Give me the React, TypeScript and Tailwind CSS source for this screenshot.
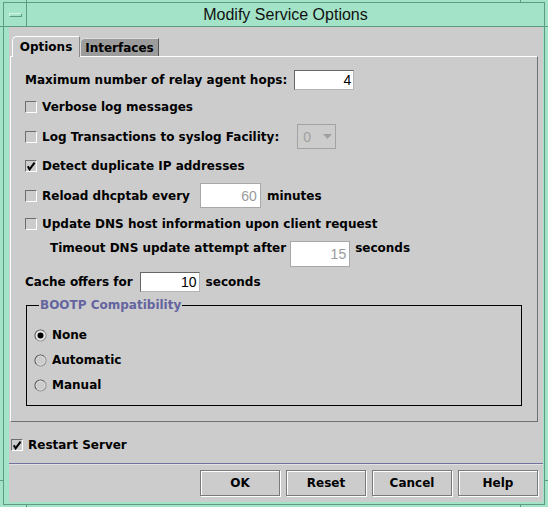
import React from 'react';

function CheckBox({ checked }: { checked?: boolean }) {
  return (
    <span className="flex h-[12px] w-[12px] shrink-0 items-center justify-center border border-t-[#6e6e6e] border-l-[#6e6e6e] border-r-white border-b-white">
      {checked && (
        <svg width="10" height="10" viewBox="0 0 10 10">
          <path d="M1.8 5.2 L3.6 8.4 L8.6 1.6" fill="none" stroke="#000" strokeWidth="2" />
        </svg>
      )}
    </span>
  );
}

function Radio({ selected }: { selected?: boolean }) {
  return (
    <svg width="13" height="13" viewBox="0 0 13 13" className="shrink-0">
      <circle cx="6.5" cy="6.5" r="5.5" fill={selected ? '#e6e6e6' : '#cccccc'} />
      <path d="M2.61 10.39 A5.5 5.5 0 0 1 10.39 2.61" fill="none" stroke="#4a4a4a" strokeWidth="1.1" />
      <path d="M10.39 2.61 A5.5 5.5 0 0 1 2.61 10.39" fill="none" stroke="#8c8c8c" strokeWidth="1.1" />
      <circle cx="6.5" cy="6.5" r="4.6" fill="none" stroke="#ececec" strokeWidth="0.6" />
      {selected && <circle cx="6.5" cy="6.5" r="3" fill="#000" />}
    </svg>
  );
}

function CheckRow({ label, checked, className }: { label: string; checked?: boolean; className: string }) {
  return (
    <div className={`flex items-center gap-[5px] ${className}`}>
      <CheckBox checked={checked} />
      <span>{label}</span>
    </div>
  );
}

function Button({ label }: { label: string }) {
  return (
    <button className="flex h-[26px] w-[80px] items-center justify-center border border-[#7a7a7a] bg-[#cccccc] shadow-[inset_1px_1px_0_#ffffff,1px_1px_0_#ffffff]">
      {label}
    </button>
  );
}

export default function App() {
  return (
    <div className="relative h-[507px] w-[548px] overflow-hidden bg-[#a3e3c8] pt-[2px] pr-[3px] pb-[2px] pl-[3px] font-['DejaVu_Sans',sans-serif] text-[12px] leading-[14px] font-bold text-black">
      {/* resize handle ticks on the window frame */}
      <div className="absolute top-0 left-[26px] h-[3px] w-px bg-[#5e9c82]" />
      <div className="absolute top-0 left-[520px] h-[3px] w-px bg-[#5e9c82]" />
      <div className="absolute bottom-0 left-[26px] h-[3px] w-px bg-[#5e9c82]" />
      <div className="absolute bottom-0 left-[520px] h-[3px] w-px bg-[#5e9c82]" />
      <div className="absolute top-[26px] left-0 h-px w-[3px] bg-[#5e9c82]" />
      <div className="absolute top-[480px] left-0 h-px w-[3px] bg-[#5e9c82]" />
      <div className="absolute top-[26px] right-0 h-px w-[3px] bg-[#5e9c82]" />
      <div className="absolute top-[480px] right-0 h-px w-[3px] bg-[#5e9c82]" />

      <div className="flex h-full flex-col border border-[#5e9c82]">
        {/* title bar */}
        <div className="flex h-[24px] shrink-0 border-b border-[#5e9c82]">
          <div className="flex w-[23px] items-center justify-center border-r border-[#5e9c82]">
            <div className="h-[4px] w-[13px] border border-t-[#d6f5e8] border-l-[#d6f5e8] border-r-[#5e9c82] border-b-[#5e9c82]" />
          </div>
          <div className="flex flex-1 items-center justify-center font-['Liberation_Sans',sans-serif] text-[16px] leading-[18px] font-normal text-[#111111]">
            Modify Service Options
          </div>
        </div>

        {/* dialog body */}
        <div className="mr-[1px] mb-[2px] ml-[5px] flex flex-1 flex-col bg-[#cccccc]">
          {/* tabs */}
          <div className="relative z-10 mt-[9px] -mb-px ml-[3px] flex h-[21px] items-end">
            <div className="flex h-[21px] w-[68px] items-center justify-center rounded-tl-[5px] border-t border-l border-r border-t-white border-l-white border-r-[#8a8a8a] bg-[#cccccc]">
              Options
            </div>
            <div className="mb-[1px] flex h-[18px] w-[79px] items-center justify-center rounded-tl-[5px] border-t border-l border-r border-t-[#dddddd] border-l-[#dddddd] border-r-[#555555] bg-[#9c9c9c]">
              Interfaces
            </div>
          </div>

          {/* tab panel */}
          <div className="ml-[1px] flex w-[528px] flex-col border border-t-white border-l-white border-r-[#707070] border-b-[#707070] pl-[14px]">
            <div className="mt-[13px] flex h-[20px] items-center">
              <span>Maximum number of relay agent hops:</span>
              <div className="ml-[7px] flex h-[20px] w-[60px] items-center justify-end border border-t-[#666666] border-l-[#666666] border-r-[#b4b4b4] border-b-[#b4b4b4] bg-white pr-[2px] font-['Liberation_Sans',sans-serif] text-[14px] font-normal">
                4
              </div>
            </div>

            <CheckRow className="mt-[10px] h-[14px]" label="Verbose log messages" />

            <div className="mt-[10px] flex h-[25px] items-center gap-[5px]">
              <CheckBox />
              <span>Log Transactions to syslog Facility:</span>
              <div className="ml-[13px] flex h-[25px] w-[39px] items-center border border-[#a2a2a2] pl-[5px] font-['Liberation_Sans',sans-serif] text-[14px] font-normal text-[#a0a0a0]">
                0
                <svg width="9" height="5" viewBox="0 0 9 5" className="ml-[12px]">
                  <polygon points="0,0 9,0 4.5,5" fill="#a0a0a0" />
                </svg>
              </div>
            </div>

            <CheckRow className="mt-[10px] h-[14px]" label="Detect duplicate IP addresses" checked />

            <div className="mt-[10px] flex h-[25px] items-center gap-[5px]">
              <CheckBox />
              <span>Reload dhcptab every</span>
              <div className="ml-[5px] flex h-[25px] w-[61px] items-center justify-end border border-[#a8a8a8] bg-white pr-[3px] font-['Liberation_Sans',sans-serif] text-[14px] font-normal text-[#9a9a9a]">
                60
              </div>
              <span className="ml-[1px]">minutes</span>
            </div>

            <CheckRow className="mt-[9px] h-[14px]" label="Update DNS host information upon client request" />

            <div className="mt-[10px] ml-[25px] flex h-[26px] items-start">
              <span className="leading-[15px]">Timeout DNS update attempt after</span>
              <div className="ml-[4px] flex h-[26px] w-[60px] items-center justify-end border border-[#a8a8a8] bg-white pr-[3px] font-['Liberation_Sans',sans-serif] text-[14px] font-normal text-[#9a9a9a]">
                15
              </div>
              <span className="ml-[5px] leading-[15px]">seconds</span>
            </div>

            <div className="mt-[5px] flex h-[20px] items-center">
              <span>Cache offers for</span>
              <div className="ml-[7px] flex h-[20px] w-[60px] items-center justify-end border border-t-[#666666] border-l-[#666666] border-r-[#b4b4b4] border-b-[#b4b4b4] bg-white pr-[2px] font-['Liberation_Sans',sans-serif] text-[14px] font-normal">
                10
              </div>
              <span className="ml-[6px]">seconds</span>
            </div>

            <fieldset className="mt-[6px] mr-[15px] mb-[15px] ml-[1px] border border-black pb-[13px] pl-[7px]">
              <legend className="ml-[5px] px-[1px] leading-[14px] text-[#6464a0]">BOOTP Compatibility</legend>
              <div className="mt-[16px] flex h-[14px] items-center gap-[5px]">
                <Radio selected />
                <span>None</span>
              </div>
              <div className="mt-[11px] flex h-[14px] items-center gap-[5px]">
                <Radio />
                <span>Automatic</span>
              </div>
              <div className="mt-[11px] flex h-[14px] items-center gap-[5px]">
                <Radio />
                <span>Manual</span>
              </div>
            </fieldset>
          </div>

          <CheckRow className="mt-[17px] ml-[2px] h-[12px]" label="Restart Server" checked />

          <div className="mt-[12px] h-[2px] border-t border-b border-t-[#7272a2] border-b-[#e2e2e2]" />

          <div className="mt-[5px] flex justify-end gap-[6px] pr-[5px]">
            <Button label="OK" />
            <Button label="Reset" />
            <Button label="Cancel" />
            <Button label="Help" />
          </div>
        </div>
      </div>
    </div>
  );
}
